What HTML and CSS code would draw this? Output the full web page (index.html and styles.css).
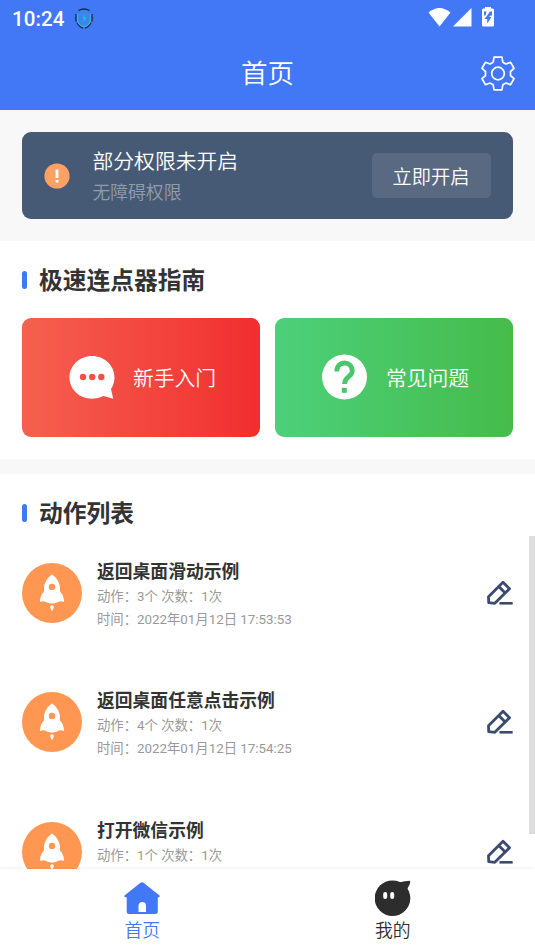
FILE: index.html
```html
<!DOCTYPE html>
<html lang="zh-CN">
<head>
<meta charset="utf-8">
<title>首页</title>
<link rel="stylesheet" href="styles.css">
</head>
<body>
<svg class="defs" width="0" height="0">
  <symbol id="rocket" viewBox="0 0 60 60">
    <circle cx="30" cy="30" r="30" fill="#ff9753"/>
    <path fill="#fff" fill-rule="evenodd" d="M30 11.500C25.500 14.500 22 19.500 22 25.500V28.500C19.500 31 18 34 18 39C20 38 22.500 37.800 24.500 39.200Q27 40.500 30 40.500T35.500 39.200C37.500 37.800 40 38 42 39C42 34 40.500 31 38 28.500V25.500C38 19.500 34.500 14.500 30 11.500ZM30 20.700A3.200 3.200 0 1 1 30 27.100A3.200 3.200 0 1 1 30 20.700Z"/>
    <path fill="#fff" d="M30 42.300C31.400 42.300 32 43.500 31.700 45L30 48.300L28.300 45C28 43.500 28.600 42.300 30 42.300Z"/>
  </symbol>
  <symbol id="edit" viewBox="0 0 27 25">
    <path d="M17 2.300L23.500 8.800L8.800 23.300L2.700 22.700L2.500 16.800ZM13 6.700L19.200 13" fill="none" stroke="#3b4b70" stroke-width="2.800" stroke-linejoin="round"/>
    <path d="M13.500 23.300H26.700" stroke="#3b4b70" stroke-width="2.600"/>
  </symbol>
</svg>
<div class="app">
  <header class="header">
    <div class="status">
      <span class="clock">10:24</span>
      <svg class="status-app" width="18" height="21" viewBox="0 0 18 21" fill="none">
        <ellipse cx="9" cy="10.500" rx="7" ry="8.500" fill="#3a86ea"/>
        <path d="M1 13.500V6M17 13.500V6M3.500 2.500Q9-.500 14.500 2.500M2 14.500Q4 18.800 8 20M16 14.500Q14 18.800 10 20" stroke="#17283f" stroke-width="1.400"/>
        <path d="M2.500 6V12Q3.500 18 9 18.500Q14.500 18 15.500 12V6" stroke="#31b4ee" stroke-width="1.300"/>
        <path d="M10 6L7.500 10.500H9.500L8 15L11.500 9.500H9.500Z" fill="#20bdf2"/>
      </svg>
      <svg class="status-icons" width="68" height="22" viewBox="0 0 68 22">
        <path fill="#fff" d="M.500 5.500Q11.500-3.500 22.500 5.500L11.500 19.500Z"/>
        <path fill="#fff" d="M43.500 1V19.500H25Z"/>
        <rect x="54" y="1.500" width="12" height="18" rx="1.500" fill="#fff"/>
        <rect x="57" y="0" width="6" height="3" fill="#fff"/>
        <path fill="#4278f5" d="M56 4.500H58.500L57.500 8.500H56ZM61.500 4.500H64V8.500H62.500L61 10H63.500L59.200 16.500V12H56.500L61 6Z"/>
      </svg>
    </div>
    <div class="titlebar">
      <h1>首页</h1>
      <svg class="gear" width="34" height="35" viewBox="0 0 34 35" fill="none" stroke="#fff" stroke-width="1.700" stroke-linejoin="round">
        <path d="M13 1.200H21L21.800 6.200L25 8L29.500 6.300L33 12.300L29.500 15.500V19.500L33 22.700L29.500 28.700L25 27L21.800 28.800L21 33.800H13L12.200 28.800L9 27L4.500 28.700L1 22.700L4.500 19.500V15.500L1 12.300L4.500 6.300L9 8L12.200 6.200Z"/>
        <circle cx="17" cy="17.500" r="6.300"/>
      </svg>
    </div>
  </header>
  <main class="content">
    <section class="notice-wrap">
      <div class="notice">
        <svg class="alert" width="26" height="26" viewBox="0 0 26 26"><circle cx="13" cy="13" r="12.600" fill="#ffa064"/><path d="M13 6.500V15M13 17V19.500" stroke="#fff" stroke-width="2.800"/></svg>
        <div class="notice-text">
          <p class="notice-title">部分权限未开启</p>
          <p class="notice-sub">无障碍权限</p>
        </div>
        <button class="enable">立即开启</button>
      </div>
    </section>
    <section class="guide">
      <h2>极速连点器指南</h2>
      <div class="cards">
        <div class="card red">
          <svg width="46" height="46" viewBox="0 0 46 46"><path fill="#fff" d="M23 2C35 2 45.500 11 45.500 23.500C45.500 28 44 32 42 35L44.200 44.700L34.500 42Q29 44.700 23 44.700C10.500 44.700.500 35.500.500 23.500S10.500 2 23 2Z"/><g fill="#f45045"><circle cx="14" cy="23" r="3.200"/><circle cx="23.200" cy="23" r="3.200"/><circle cx="32.300" cy="23" r="3.200"/></g></svg>
          <span>新手入门</span>
        </div>
        <div class="card green">
          <svg width="46" height="46" viewBox="0 0 46 46"><circle cx="22.500" cy="23" r="22.500" fill="#fff"/><path d="M14.800 17.500C14.800 6 30.200 6.500 30.200 17C30.200 23 22.500 22.500 22.500 30" fill="none" stroke="#49c76a" stroke-width="4.800"/><path fill="#49c76a" d="M19.800 33.800H24.800V38.800H19.800Z"/></svg>
          <span>常见问题</span>
        </div>
      </div>
    </section>
    <section class="actions">
      <h2>动作列表</h2>
      <ul class="list">
        <li class="item">
          <svg class="rocket"><use href="#rocket"/></svg>
          <div class="info"><h3>返回桌面滑动示例</h3><p>动作：3个 次数：1次</p><p>时间：2022年01月12日 17:53:53</p></div>
          <svg class="edit"><use href="#edit"/></svg>
        </li>
        <li class="item">
          <svg class="rocket"><use href="#rocket"/></svg>
          <div class="info"><h3>返回桌面任意点击示例</h3><p>动作：4个 次数：1次</p><p>时间：2022年01月12日 17:54:25</p></div>
          <svg class="edit"><use href="#edit"/></svg>
        </li>
        <li class="item">
          <svg class="rocket"><use href="#rocket"/></svg>
          <div class="info"><h3>打开微信示例</h3><p>动作：1个 次数：1次</p></div>
          <svg class="edit"><use href="#edit"/></svg>
        </li>
      </ul>
    </section>
    <div class="scrollbar"></div>
  </main>
  <nav class="tabs">
    <a class="tab active">
      <svg width="36" height="36" viewBox="0 0 36 36"><path fill="#4278f5" fill-rule="evenodd" d="M16.500 2.700Q18 1.700 19.500 2.700L35.500 15.500Q36.500 17.300 33.800 17.500V31.500Q33.800 34 31.300 34H5.200Q2.700 34 2.700 31.500V17.500Q-.500 17.300.500 15.500ZM14.500 32H22V26Q22 22 18.250 22T14.500 26Z"/></svg>
      <span>首页</span>
    </a>
    <a class="tab">
      <svg width="36" height="36" viewBox="0 0 36 36"><circle cx="17.500" cy="18.200" r="17.800" fill="#2d2d2d"/><path fill="#2d2d2d" d="M24 2.500Q30 1 35.200.700Q35.500 4 32 9L29 12Z"/><g fill="#fff"><rect x="8.200" y="12" width="4" height="7" rx="2"/><rect x="15.200" y="12" width="4" height="7" rx="2"/></g></svg>
      <span>我的</span>
    </a>
  </nav>
</div>
</body>
</html>
```
FILE: styles.css
```css
* { box-sizing: border-box; margin: 0; padding: 0; }
body {
  font-family: Roboto, "Noto Sans CJK SC", sans-serif;
  background: #fff;
  color: #333;
}
.defs { position: absolute; }
.app {
  display: flex;
  flex-direction: column;
  height: 951px;
  overflow: hidden;
}
svg { flex: none; display: block; }
.header { flex: none; height: 110px; background: #4278f5; color: #fff; }
.status { display: flex; align-items: center; height: 37px; padding: 0 39px 0 12px; }
.clock { font-size: 20.500px; font-weight: 500; letter-spacing: 0.100px; }
.status-app { margin-left: 10px; }
.status-icons { margin-left: auto; margin-top: -1px; }
.titlebar {
  display: grid;
  grid-template-columns: 1fr auto 1fr;
  align-items: center;
  height: 73px;
  padding: 0 20px;
}
h1 { grid-column: 2; font-size: 26.500px; line-height: 36px; font-weight: 350; }
.gear { justify-self: end; margin-top: -1px; }
.content { position: relative; flex: 1; min-height: 0; overflow: hidden; }
.notice-wrap { height: 131px; padding: 22px; background: #f8f8f8; }
.notice {
  display: flex;
  align-items: center;
  height: 87px;
  padding: 0 22.500px 0 22px;
  border-radius: 9px;
  background: #475a75;
}
.notice-text { margin-left: 22.500px; padding-top: 4px; }
.notice-title { color: #fff; font-size: 20.800px; line-height: 31px; font-weight: 350; }
.notice-sub { color: #929cab; font-size: 17.800px; line-height: 30px; font-weight: 350; }
.enable {
  width: 119px;
  height: 45px;
  margin-left: auto;
  border: 0;
  border-radius: 5px;
  background: #5a6982;
  color: #fff;
  font: 350 19.300px Roboto, "Noto Sans CJK SC", sans-serif;
}
.guide { height: 218px; padding: 22px 22px 0; }
h2 {
  display: flex;
  align-items: center;
  gap: 12px;
  font-size: 23.750px;
  line-height: 36px;
  font-weight: 700;
}
h2::before { content: ""; width: 5px; height: 18px; margin-top: -2px; border-radius: 2.500px; background: #4278f5; }
.cards { display: grid; grid-template-columns: 1fr 1fr; gap: 15px; margin-top: 19px; }
.card {
  display: flex;
  align-items: center;
  justify-content: center;
  gap: 18px;
  height: 119px;
  padding: 0 0 1px 3px;
  border-radius: 9px;
  color: #fff;
  font-size: 20.800px;
  font-weight: 350;
}
.red { background: linear-gradient(90deg, #f5604f, #f12e2f); }
.green { background: linear-gradient(90deg, #4dd07b, #45bc4a); }
.actions { padding: 22px 22px 0; border-top: 15px solid #f8f8f8; }
.list { list-style: none; margin-top: 26px; }
.item { display: flex; align-items: flex-start; height: 129.400px; }
.rocket { width: 60px; height: 60px; margin-top: 5px; }
.info { flex: 1; margin-left: 15px; }
h3 { font-size: 17.800px; line-height: 27px; font-weight: 700; }
.info p { font-size: 13.350px; line-height: 23px; color: #999; }
.edit { width: 27px; height: 25px; margin-top: 22px; }
.scrollbar { position: absolute; top: 426px; right: 0; width: 6px; height: 298px; background: #ddd; }
.tabs {
  position: relative;
  flex: none;
  display: grid;
  grid-template-columns: 1fr 1fr;
  height: 82px;
  padding: 11px 17px 0;
  background: #fff;
  box-shadow: 0 -1px 3px rgba(0, 0, 0, 0.060);
}
.tab { display: flex; flex-direction: column; align-items: center; font-size: 17.800px; line-height: 30px; color: #2d2d2d; font-weight: 350; }
.active { color: #4278f5; }
```
